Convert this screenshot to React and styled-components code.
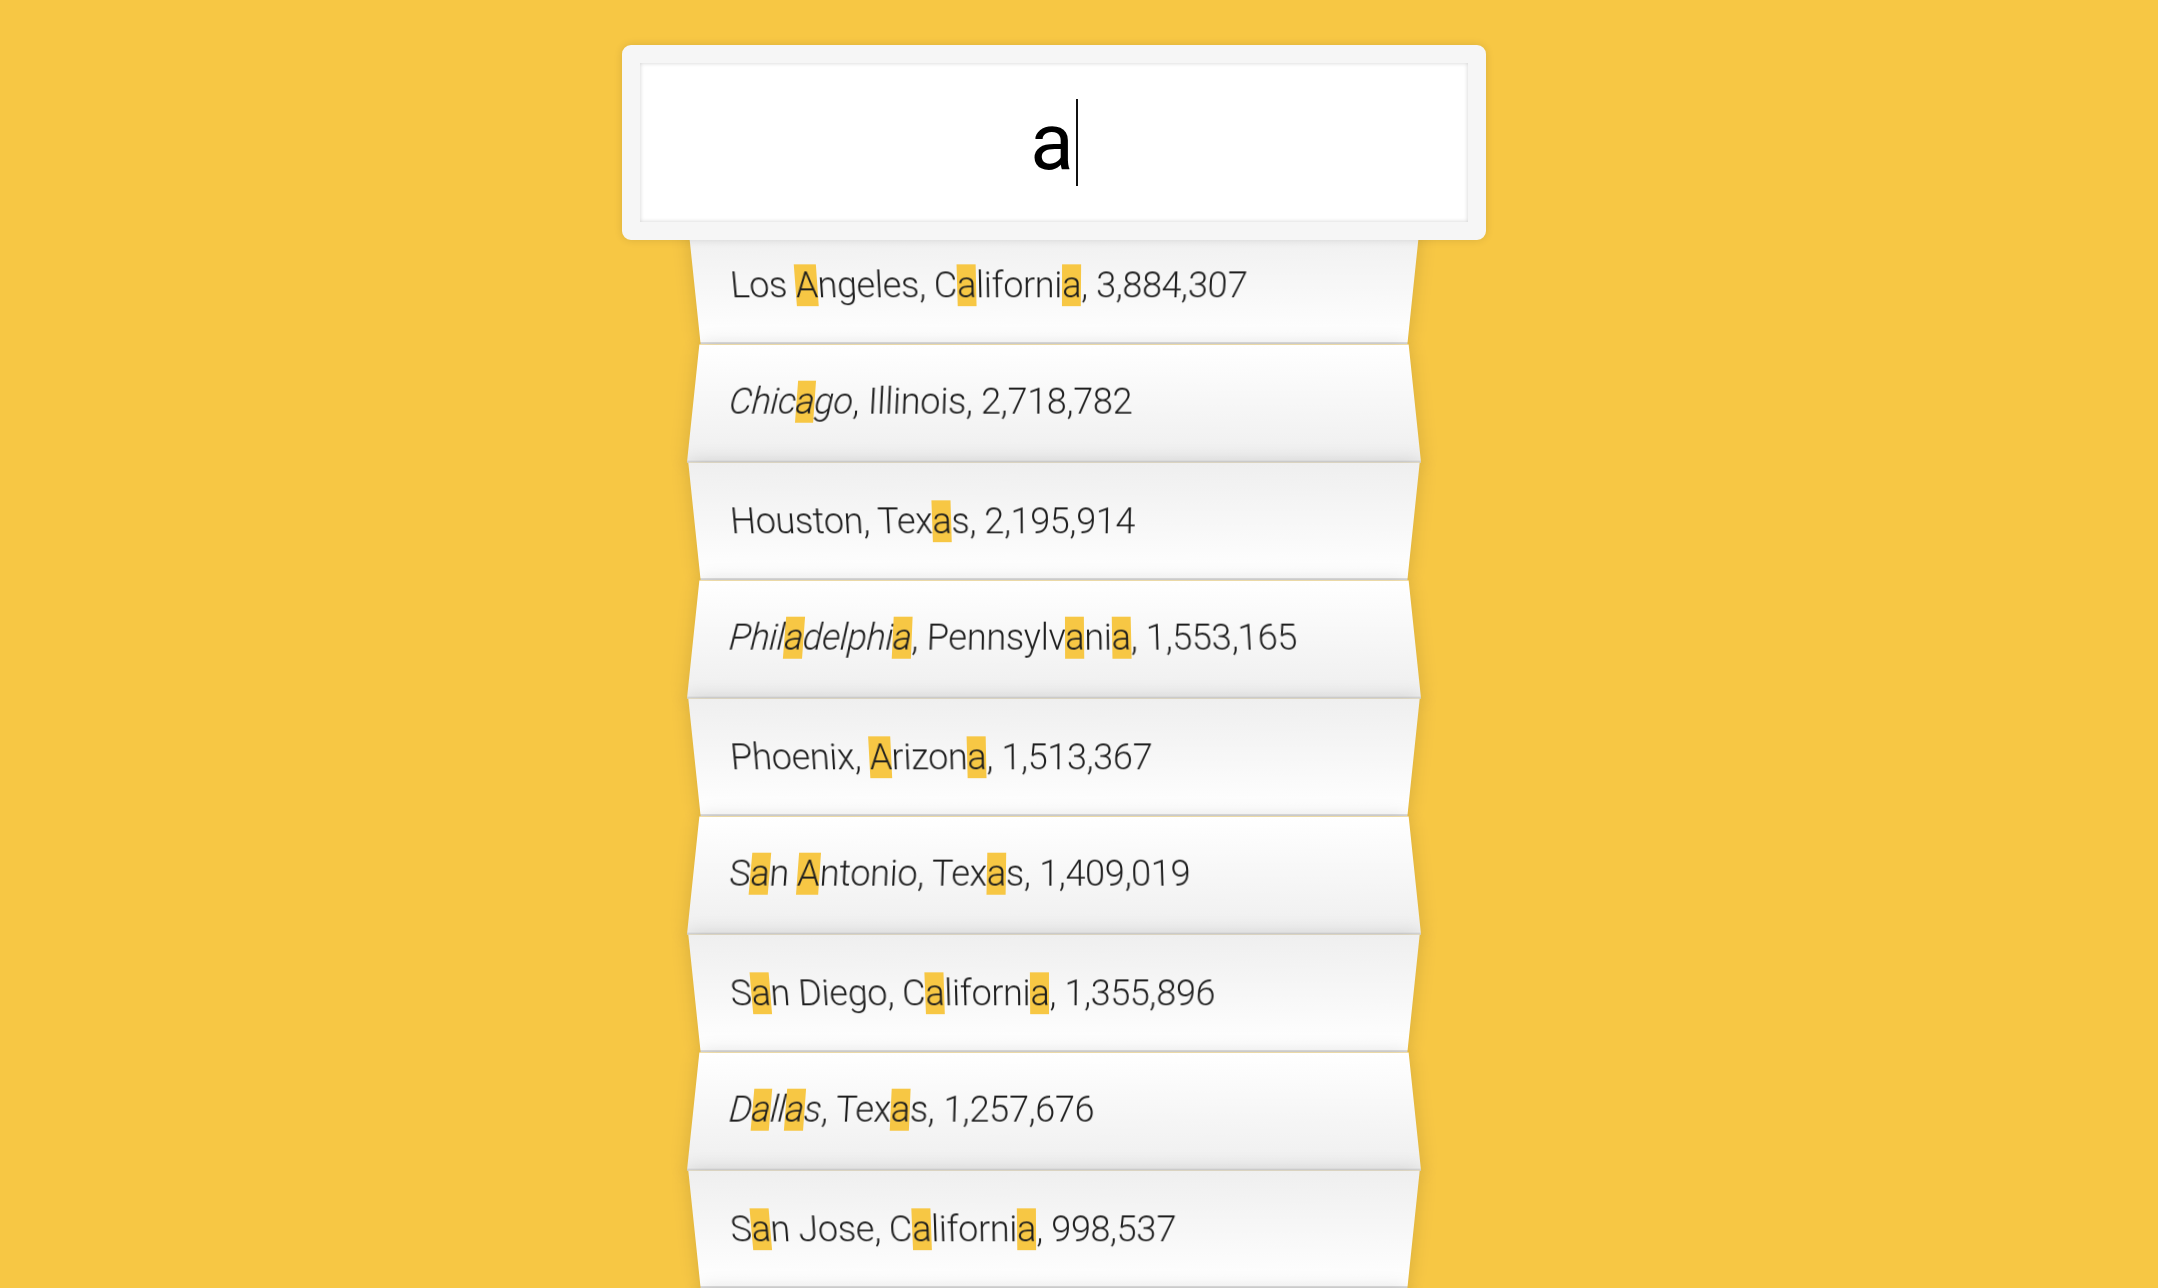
import styled, { createGlobalStyle, css } from "styled-components";

const GlobalStyle = createGlobalStyle`
  html, body {
    margin: 0;
    padding: 0;
    overflow: hidden;
  }
  html {
    box-sizing: border-box;
    background: linear-gradient(to bottom, #f7c744 0%, #f7c744 92%, #f1c03f 100%);
    min-height: 100%;
    font-family: Roboto, "Liberation Sans", sans-serif;
    font-weight: 300;
  }
  *, *:before, *:after {
    box-sizing: inherit;
  }
`;

const Page = styled.main`
  display: flex;
  justify-content: center;
  padding: 45px 50px 0 0;
  min-height: 100vh;
`;

const SearchForm = styled.form`
  width: 720px;
  margin: 0;
`;

const SearchField = styled.div`
  position: relative;
  z-index: 2;
  margin: 0 -72px -18px;
  padding: 36px;
  background: #fff;
  border: 18px solid #f6f6f6;
  border-radius: 9px;
  box-shadow: 0 0 9px rgba(0, 0, 0, 0.12), inset 0 0 4px rgba(0, 0, 0, 0.19);
  text-align: center;
  font-family: Roboto, "Liberation Sans", sans-serif;
  font-weight: 400;
  font-size: 80px;
  line-height: 87px;
  color: #000;
  white-space: nowrap;
`;

const Caret = styled.span`
  display: inline-block;
  vertical-align: top;
  width: 2px;
  height: 87px;
  margin-left: 2px;
  background: #111;
`;

const Suggestions = styled.ul`
  margin: 0;
  padding: 0;
  position: relative;
  list-style: none;
`;

const Suggestion = styled.li`
  margin: 0;
  padding: 36px;
  height: 118px;
  font-size: 36px;
  line-height: 44px;
  letter-spacing: -0.3px;
  color: #1e1e1e;
  white-space: nowrap;
  border-bottom: 2px solid #d8d8d8;
  box-shadow: 0 0 18px rgba(0, 0, 0, 0.14);
  ${(p) =>
    p.$even
      ? css`
          transform: perspective(180px) rotateX(3deg) translateY(3.6px) scale(1.001);
          background: linear-gradient(to bottom, #ffffff 0%, #efefef 100%);
        `
      : css`
          transform: perspective(180px) rotateX(-3deg) translateY(5.4px);
          background: linear-gradient(to top, #ffffff 0%, #efefef 100%);
        `}
`;

const Name = styled.span`
  font-style: ${(p) => (p.$slant ? "italic" : "normal")};
`;

const Hl = styled.span`
  background: #f7c744;
`;

const cities = [
  { city: "Los Angeles", state: "California", population: "3,884,307" },
  { city: "Chicago", state: "Illinois", population: "2,718,782", slant: true },
  { city: "Houston", state: "Texas", population: "2,195,914" },
  { city: "Philadelphia", state: "Pennsylvania", population: "1,553,165", slant: true },
  { city: "Phoenix", state: "Arizona", population: "1,513,367" },
  { city: "San Antonio", state: "Texas", population: "1,409,019" },
  { city: "San Diego", state: "California", population: "1,355,896" },
  { city: "Dallas", state: "Texas", population: "1,257,676", slant: true },
  { city: "San Jose", state: "California", population: "998,537" },
  { city: "Austin", state: "Texas", population: "885,400" },
];

const query = "a";

const highlight = (text) => {
  const parts = text.split(new RegExp(`(${query})`, "gi"));
  return parts.map((part, i) =>
    i % 2 === 1 ? <Hl key={i}>{part}</Hl> : part
  );
};

const App = () => {
  return (
    <>
      <GlobalStyle />
      <Page>
        <SearchForm onSubmit={(e) => e.preventDefault()}>
          <SearchField role="textbox" aria-label="City or State">
            {query}
            <Caret />
          </SearchField>
          <Suggestions>
            {cities.map((c, i) => (
              <Suggestion key={c.city} $even={i % 2 === 1}>
                <Name $slant={c.slant}>{highlight(c.city)}</Name>, {highlight(c.state)},{" "}
                {c.population}
              </Suggestion>
            ))}
          </Suggestions>
        </SearchForm>
      </Page>
    </>
  );
};

export default App;
